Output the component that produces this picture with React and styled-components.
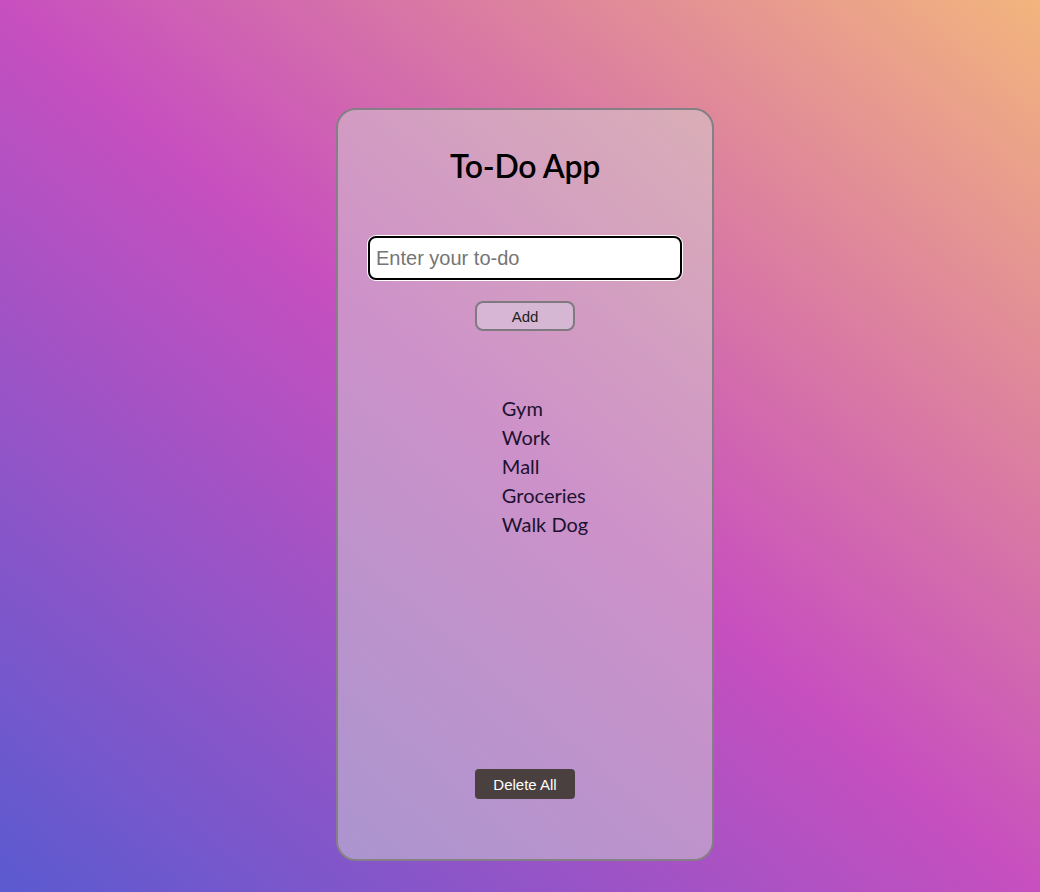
import * as React from 'react';
import styled, { createGlobalStyle } from 'styled-components';

const GlobalStyle = createGlobalStyle`
  html, body {
    margin: 0;
    padding: 0;
    height: 100%;
  }
  body {
    background: linear-gradient(to top right, #5b5ad0 0%, #c74fbf 50%, #f3b57d 100%);
    background-attachment: fixed;
    font-family: Lato, "Noto Sans", sans-serif;
  }
`

const Page = styled.div`
  display: flex;
  justify-content: center;
  padding: 108px 0 0 10px;
  height: 892px;
  box-sizing: border-box;
`

const Card = styled.div`
  width: 378px;
  height: 753px;
  box-sizing: border-box;
  border: 2px solid #858085;
  border-radius: 20px;
  background-color: rgba(211, 211, 211, 0.5);
  display: flex;
  flex-direction: column;
  align-items: center;
`

const Title = styled.h1`
  margin: 36px 0 0;
  font-family: Lato, sans-serif;
  font-size: 32px;
  font-weight: 600;
  color: #000;
  letter-spacing: -0.3px;
`

const Input = styled.input`
  margin-top: 51px;
  width: 314px;
  height: 44px;
  box-sizing: border-box;
  border: 2px solid #000;
  border-radius: 8px;
  box-shadow: 0 0 0 1px #fff;
  padding: 0 6px;
  font-family: "Liberation Sans", Arial, sans-serif;
  font-size: 20px;
  outline: none;
  &::placeholder {
    color: #757575;
  }
`

const Button = styled.button`
  width: 100px;
  height: 30px;
  box-sizing: border-box;
  font-family: "Liberation Sans", Arial, sans-serif;
  font-size: 15px;
  border-radius: ${p => (p.$dark ? '4px' : '8px')};
  border: ${p => (p.$dark ? 'none' : '2px solid #7e7a80')};
  background: ${p => (p.$dark ? '#4a4040' : 'rgba(215, 190, 215, 0.8)')};
  color: ${p => (p.$dark ? '#fff' : '#222')};
  cursor: pointer;
`

const AddButton = styled(Button)`
  margin-top: 21px;
`

const ListWrap = styled.div`
  margin-top: 63px;
  flex: 1;
  text-align: center;
`

const List = styled.ul`
  display: inline-block;
  text-align: left;
  list-style: none;
  margin: 0;
  padding-left: 40px;
`

const Item = styled.li`
  font-family: Lato, sans-serif;
  font-size: 20px;
  line-height: 29px;
  color: #1c1230;
`

const Footer = styled.div`
  margin-bottom: 60px;
`

const todos = ['Gym', 'Work', 'Mall', 'Groceries', 'Walk Dog'];

const App = () => {
  return (
    <>
      <GlobalStyle />
      <Page>
        <Card>
          <Title>To-Do App</Title>
          <Input placeholder="Enter your to-do" />
          <AddButton>Add</AddButton>
          <ListWrap>
            <List>
              {todos.map(t => (
                <Item key={t}>{t}</Item>
              ))}
            </List>
          </ListWrap>
          <Footer>
            <Button $dark>Delete All</Button>
          </Footer>
        </Card>
      </Page>
    </>
  )
}

export default App;
